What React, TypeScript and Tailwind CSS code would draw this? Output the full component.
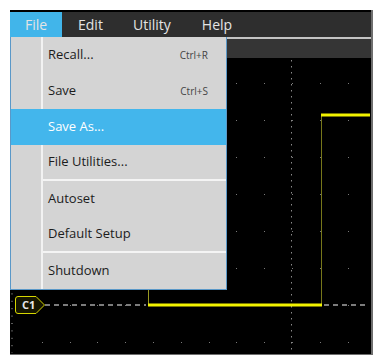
import React from 'react';

const items = [
  { label: 'Recall...', key: 'Ctrl+R' },
  { label: 'Save', key: 'Ctrl+S' },
  { label: 'Save As...', active: true },
  { label: 'File Utilities...', sep: true },
  { label: 'Autoset' },
  { label: 'Default Setup', sep: true },
  { label: 'Shutdown' },
];

function Graticule() {
  const cols = [32, 60, 87, 115, 143, 171, 199, 226, 254, 282, 310, 338];
  const rows = [25, 62, 99, 136, 173, 210, 247, 284];
  const centerDots = [];
  for (let y = 2; y < 295; y += 6) centerDots.push(y);
  const leftTicks = [];
  for (let y = 6; y < 295; y += 7.4) leftTicks.push(y);
  return (
    <svg width="361" height="295" className="block">
      {rows.map((y) =>
        cols.map((x) => <rect key={x + '-' + y} x={x} y={y} width="1" height="1" fill="#7a7a7a" />)
      )}
      {centerDots.map((y) => (
        <rect key={'c' + y} x="281" y={y} width="1" height="1.5" fill="#8a8a8a" />
      ))}
      {leftTicks.map((y) => (
        <rect key={'l' + y} x="1" y={y} width="2" height="1" fill="#5a5a5a" />
      ))}
      <line x1="35" y1="247" x2="136" y2="247" stroke="#7c7c7c" strokeWidth="2" strokeDasharray="5 4" />
      <line x1="314" y1="247" x2="358" y2="247" stroke="#7c7c7c" strokeWidth="2" strokeDasharray="5 4" />
      <line x1="311.5" y1="57" x2="311.5" y2="247" stroke="#77771a" strokeWidth="1" />
      <line x1="138.5" y1="57" x2="138.5" y2="247" stroke="#9a9a22" strokeWidth="1" />
      <line x1="0" y1="57" x2="139" y2="57" stroke="#f2f200" strokeWidth="3" />
      <line x1="138" y1="247" x2="312" y2="247" stroke="#f2f200" strokeWidth="3" />
      <line x1="311" y1="57" x2="360" y2="57" stroke="#f2f200" strokeWidth="3" />
    </svg>
  );
}

export default function App() {
  return (
    <main className="w-[381px] h-[363px] bg-white p-[10px] relative" style={{ fontFamily: '"Open Sans", "Noto Sans", sans-serif' }}>
      <div className="w-[363px] h-[345px] flex flex-col border-r-2 border-b border-[#6e6e6e] bg-black">
        <div className="h-[2px] bg-black" />
        <div className="h-[25px] bg-[#2e2e2e] flex items-center text-[14px] text-[#e4e4e4]">
          <div className="w-[52px] h-full bg-[#41b5ea] flex items-center justify-center">File</div>
          <div className="ml-[16px] w-[26px]">Edit</div>
          <div className="ml-[29px]">Utility</div>
          <div className="ml-[31px]">Help</div>
        </div>
        <div className="h-[2px] bg-[#c4c4c4]" />
        <div className="h-[19px] bg-[#353535]" />
        <div className="flex-1 relative">
          <Graticule />
          <div className="absolute left-[5px] top-[238px] w-[31px] h-[18px]">
            <svg width="31" height="18" className="absolute inset-0">
              <path d="M3 0.5 H21 L29.5 9 L21 17.5 H3 Q0.5 17.5 0.5 15 V3 Q0.5 0.5 3 0.5 Z" fill="#161600" stroke="#d6d600" strokeWidth="1" />
            </svg>
            <span className="absolute left-[7px] top-[1px] text-[11px] font-bold text-[#e8e8e8] leading-[16px]">C1</span>
          </div>
        </div>
      </div>

      <div className="absolute left-[10px] top-[37px] w-[217px] bg-[#d4d4d4] border-x border-b border-[#5a98c8] flex flex-col">
        {items.map((it) =>
          it.active ? (
            <div key={it.label} className="h-[36px] bg-[#43b6ec] flex items-center pl-[37px] text-[13px] text-white">
              {it.label}
            </div>
          ) : (
            <div key={it.label} className="h-[36px] flex">
              <div className="w-[30px]" />
              <div className="w-[2px] bg-[#f2f2f2]" />
              <div className={'flex-1 flex items-center justify-between pl-[5px] pr-[18px] text-[13px] text-[#1c1c1c] ' + (it.sep ? 'border-b-2 border-[#f4f4f4]' : '')}>
                <span>{it.label}</span>
                {it.key && <span className="text-[10px] text-[#444]">{it.key}</span>}
              </div>
            </div>
          )
        )}
      </div>
    </main>
  );
}
